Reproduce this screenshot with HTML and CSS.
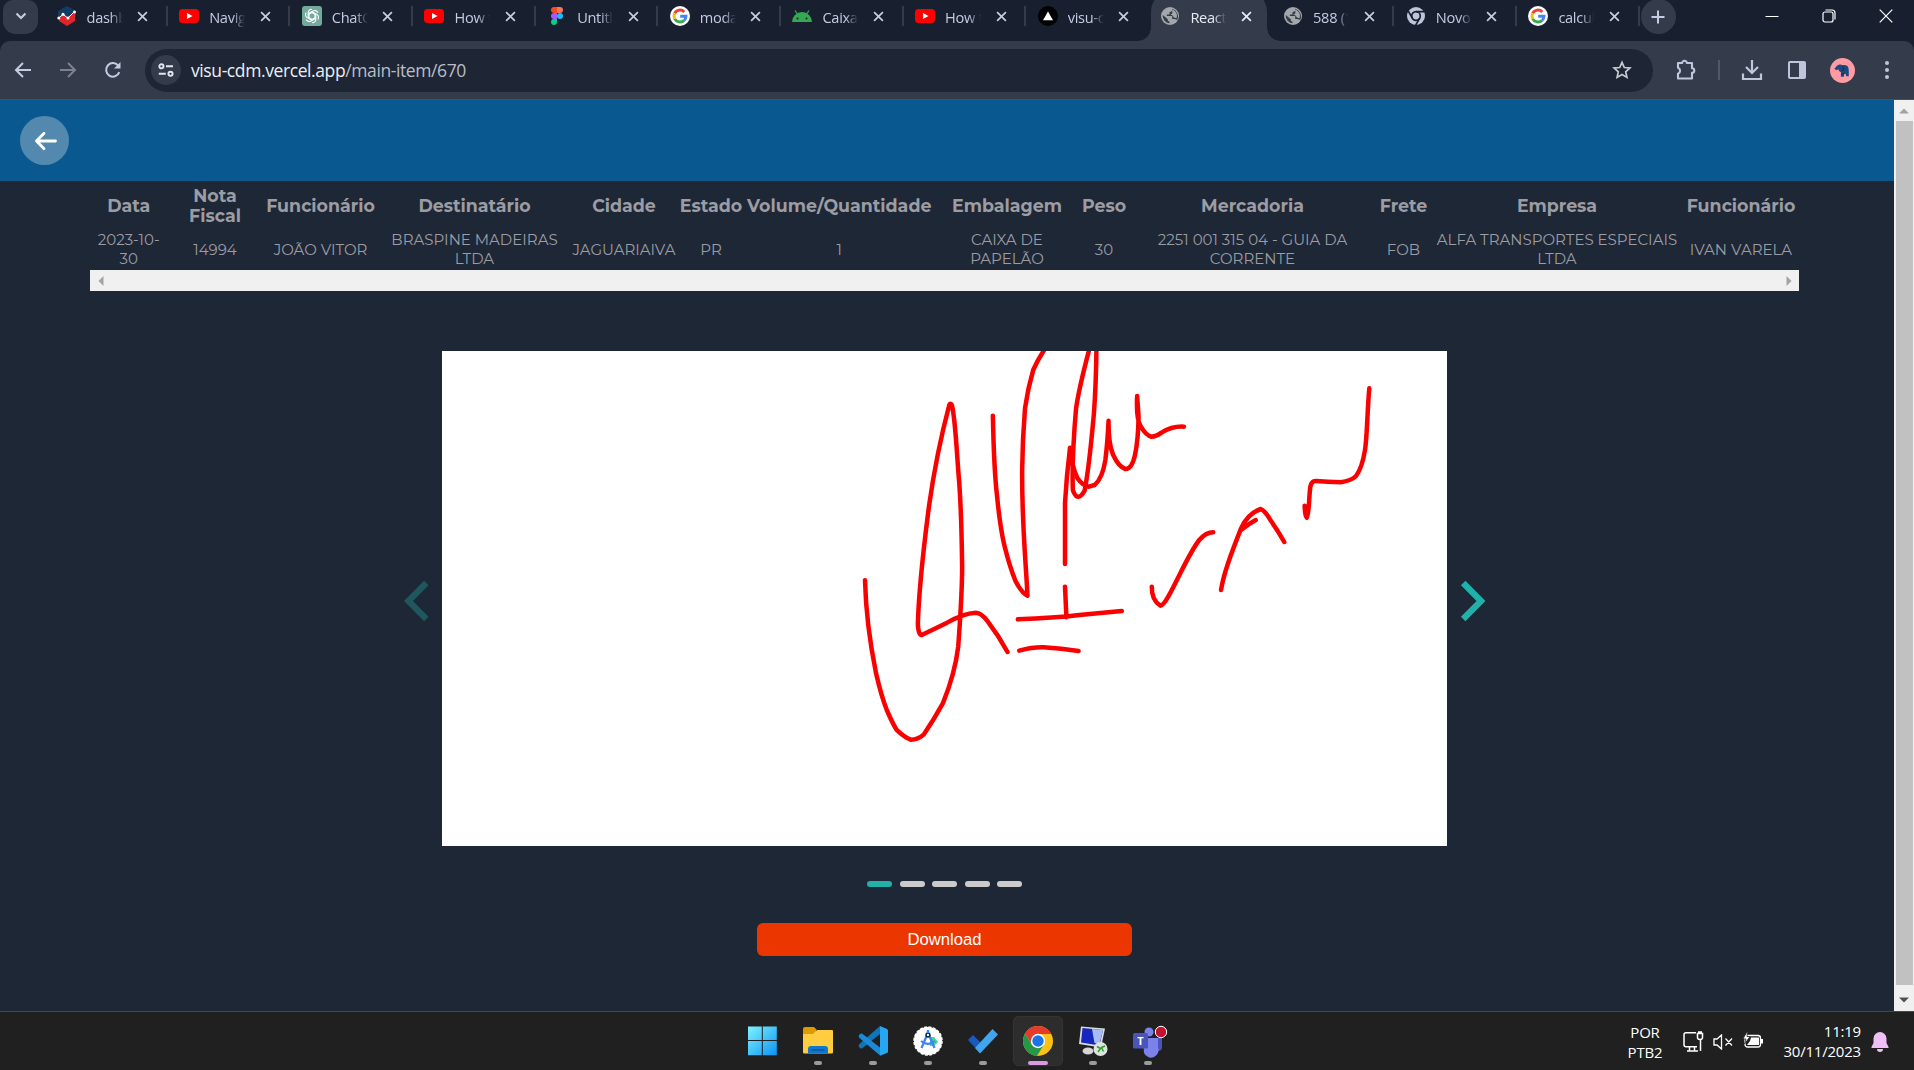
FILE: index.html
```html
<!DOCTYPE html>
<html lang="pt-BR">
<head>
<meta charset="utf-8">
<title>React App</title>
<link rel="stylesheet" href="styles.css">
</head>
<body>
<svg class="sprite" aria-hidden="true">
  <symbol id="i-close" viewBox="0 0 12 12"><path d="M1.2 1.2l9.6 9.6M10.8 1.2L1.2 10.8" fill="none" stroke="currentColor" stroke-width="1.9"/></symbol>
  <symbol id="i-yt" viewBox="0 0 20 20"><rect y="3" width="20" height="14" rx="3.5" fill="#f00"/><path d="M8 7l5.5 3L8 13z" fill="#fff"/></symbol>
  <symbol id="i-google" viewBox="0 0 20 20"><circle cx="10" cy="10" r="10" fill="#fff"/><g fill="none" stroke-width="2.9"><path d="M14.3 5.9A6 6 0 0 0 4.7 7.2" stroke="#ea4335"/><path d="M4.7 7.2a6 6 0 0 0 0 5.6" stroke="#fbbc05"/><path d="M4.7 12.8a6 6 0 0 0 9.4 1.6" stroke="#34a853"/><path d="M14.1 14.4A6 6 0 0 0 16 10.2H10.2" stroke="#4285f4"/></g></symbol>
  <symbol id="i-globe" viewBox="0 0 20 20"><circle cx="10" cy="10" r="9" fill="#a3a7ab"/><path d="M12 2.800V5L9.500 6.200V8.500H6.800V10h5.400v3h2.500l2.500 1A8 8 0 0 0 12 2.800zM2.800 9l5 4.300v1.500l1.700 1V17.300A7.400 7.400 0 0 1 2.800 9z" fill="#343c4c"/><path d="M12 3.500c3 .7 5 3.500 5 6.500l-.5 2.300L14 11.500l-2-2.500h-1.500l2-2z" fill="#a3a7ab"/></symbol>
</svg>

<header class="tabstrip">
  <button class="tab-search"><svg width="12" height="8" viewBox="0 0 12 8"><path d="M1.500 1.500L6 6l4.500-4.500" fill="none" stroke="currentColor" stroke-width="2.200"/></svg></button>
  <nav class="tabs">
    <div class="tab"><svg class="fav" viewBox="0 0 20 20"><path d="M1 5l9-5 9 5v6H1z" fill="#123d63"/><path d="M2 12l4-3 4 3 8-6v9l-8 5-8-5z" fill="#e3242b"/><path d="M1.500 12L6 8.500l5 3.500 6-6" fill="none" stroke="#fff" stroke-width="1"/><g fill="#fff"><circle cx="1.800" cy="12" r="1.500"/><circle cx="6" cy="8.300" r="1.500"/><circle cx="11" cy="12" r="1.500"/><circle cx="17.500" cy="6" r="1.500"/></g></svg><span class="tab-title">dashboard</span><svg class="x"><use href="#i-close"/></svg></div>
    <div class="tab"><svg class="fav"><use href="#i-yt"/></svg><span class="tab-title">Navigation</span><svg class="x"><use href="#i-close"/></svg></div>
    <div class="tab"><svg class="fav" viewBox="0 0 20 20"><rect width="20" height="20" rx="3" fill="#74aa9c"/><g fill="none" stroke="#fff" stroke-width="1.100"><path id="petal" d="M10 3.200c-2.600 0-3.800 1.700-3.800 3.500v4.600l3.800 2.200"/><use href="#petal" transform="rotate(60 10 10)"/><use href="#petal" transform="rotate(120 10 10)"/><use href="#petal" transform="rotate(180 10 10)"/><use href="#petal" transform="rotate(240 10 10)"/><use href="#petal" transform="rotate(300 10 10)"/></g></svg><span class="tab-title">ChatGPT</span><svg class="x"><use href="#i-close"/></svg></div>
    <div class="tab"><svg class="fav"><use href="#i-yt"/></svg><span class="tab-title">How to</span><svg class="x"><use href="#i-close"/></svg></div>
    <div class="tab"><svg class="fav" viewBox="0 0 20 20"><path d="M10 1H7a3 3 0 0 0 0 6h3z" fill="#f24e1e"/><path d="M10 1h3a3 3 0 0 1 0 6h-3z" fill="#ff7262"/><path d="M10 7H7a3 3 0 0 0 0 6h3z" fill="#a259ff"/><circle cx="13" cy="10" r="3" fill="#1abcfe"/><path d="M10 13H7a3 3 0 1 0 3 3z" fill="#0acf83"/></svg><span class="tab-title">Untitled</span><svg class="x"><use href="#i-close"/></svg></div>
    <div class="tab"><svg class="fav"><use href="#i-google"/></svg><span class="tab-title">modal</span><svg class="x"><use href="#i-close"/></svg></div>
    <div class="tab"><svg class="fav" viewBox="0 0 20 20"><path d="M0 16a10 10 0 0 1 20 0z" fill="#34a853"/><path d="M3 4.500l3 4.500M17 4.500L14 9" stroke="#34a853" stroke-width="1.300"/><circle cx="5.500" cy="12.500" r="1" fill="#182030"/><circle cx="14.500" cy="12.500" r="1" fill="#182030"/></svg><span class="tab-title">Caixa de</span><svg class="x"><use href="#i-close"/></svg></div>
    <div class="tab"><svg class="fav"><use href="#i-yt"/></svg><span class="tab-title">How to</span><svg class="x"><use href="#i-close"/></svg></div>
    <div class="tab before-active"><svg class="fav" viewBox="0 0 20 20"><circle cx="10" cy="10" r="10" fill="#000"/><path d="M10 5.500l5 8.700H5z" fill="#fff"/></svg><span class="tab-title">visu-cdm</span><svg class="x"><use href="#i-close"/></svg></div>
    <div class="tab active"><svg class="fav"><use href="#i-globe"/></svg><span class="tab-title">React App</span><svg class="x"><use href="#i-close"/></svg></div>
    <div class="tab"><svg class="fav"><use href="#i-globe"/></svg><span class="tab-title">588 (1)</span><svg class="x"><use href="#i-close"/></svg></div>
    <div class="tab"><svg class="fav" viewBox="0 0 20 20"><circle cx="10" cy="10" r="9" fill="#bfc6dc"/><circle cx="10" cy="10" r="4.300" fill="#bfc6dc" stroke="#182030" stroke-width="1.700"/><path d="M10 5.700h8M6.300 12.200l-4-7M13.700 12.200l-4 7" stroke="#182030" stroke-width="1.700"/></svg><span class="tab-title">Novo guia</span><svg class="x"><use href="#i-close"/></svg></div>
    <div class="tab"><svg class="fav"><use href="#i-google"/></svg><span class="tab-title">calculadora</span><svg class="x"><use href="#i-close"/></svg></div>
  </nav>
  <button class="tab-new"><svg width="14" height="14" viewBox="0 0 14 14"><path d="M7 .5v13M.5 7h13" stroke="currentColor" stroke-width="2"/></svg></button>
  <div class="win">
    <svg width="14" height="14" viewBox="0 0 14 14"><path d="M.5 7.500h13" stroke="#fff"/></svg>
    <svg width="14" height="14" viewBox="0 0 14 14"><g fill="none" stroke="#fff" stroke-width="1.200"><rect x="1" y="3" width="10" height="10" rx="2"/><path d="M3.500 1H10a3 3 0 0 1 3 3v6.500"/></g></svg>
    <svg width="14" height="14" viewBox="0 0 14 14"><path d="M.7.700l12.600 12.600M13.300.7L.7 13.300" stroke="#fff" stroke-width="1.200"/></svg>
  </div>
</header>

<div class="toolbar">
  <svg class="nav-ic" width="20" height="20" viewBox="0 0 20 20"><path d="M18 10H3.500M10 3l-7 7 7 7" fill="none" stroke="#c5cbe0" stroke-width="2"/></svg>
  <svg class="nav-ic" width="20" height="20" viewBox="0 0 20 20"><path d="M2 10h14.500M10 3l7 7-7 7" fill="none" stroke="#7b8191" stroke-width="2"/></svg>
  <svg class="nav-ic" width="20" height="20" viewBox="0 0 20 20"><path d="M16.300 12.200A6.800 6.800 0 1 1 15.500 6" fill="none" stroke="#c5cbe0" stroke-width="2"/><path d="M17.500 2v6.500H11z" fill="#c5cbe0"/></svg>
  <div class="omnibox">
    <span class="site"><svg width="16" height="14" viewBox="0 0 16 14"><g fill="none" stroke="#e3e6f0" stroke-width="1.900"><circle cx="3.400" cy="3.300" r="2.100"/><path d="M8 3.300h7M.8 10.800h7"/><circle cx="12.500" cy="10.800" r="2.100"/></g></svg></span>
    <span class="url"><b>visu-cdm.vercel.app</b>/main-item/670</span>
    <svg class="star" width="20" height="20" viewBox="0 0 20 20"><path d="M10 2.300l2.300 5.200 5.600.5-4.200 3.800 1.200 5.600L10 14.500l-4.900 2.900 1.200-5.600L2.100 8l5.600-.5z" fill="none" stroke="#c8cad0" stroke-width="1.700"/></svg>
  </div>
  <div class="actions">
    <svg width="24" height="24" viewBox="0 0 24 24"><path d="M4 5h4.200a2.300 2.300 0 0 1 4.600 0H18v5.200a2.300 2.300 0 0 1 0 4.600V20.500H4v-4.700a3.200 3.200 0 0 0 0-6z" fill="none" stroke="#bfc6dc" stroke-width="2.100" stroke-linejoin="round"/></svg>
    <i class="bar"></i>
    <svg class="dl" width="22" height="22" viewBox="0 0 22 22"><path d="M11 1v12M5 8l6 6 6-6M2 14.500V20h18v-5.500" fill="none" stroke="#bfc6dc" stroke-width="2.200"/></svg>
    <svg class="sp" width="20" height="20" viewBox="0 0 20 20"><rect x="2" y="2" width="16" height="16" rx="1" fill="none" stroke="#bfc6dc" stroke-width="2"/><path d="M12 2h6v16h-6z" fill="#bfc6dc"/></svg>
    <svg class="av" width="25" height="25" viewBox="0 0 25 25"><circle cx="12.500" cy="12.500" r="12.500" fill="#ff9ba3"/><path d="M4.500 10c1.500.3 1.300-2.500 4-3 1-.7 3-.6 4 .2 3-.8 5.500.3 6 3 .5 2.500.2 5 .3 8h-2.600l-.6-2.500-1.400.2-.3 2.800H10.800l.2-4.500c-1.500-.2-2-1.500-2.500-2.700-2 .8-4 .5-4-1.500z" fill="#174a80"/><path d="M12.500 8.500l1.500 2.500-2 2M11.500 16h2.500" fill="none" stroke="#0b2747" stroke-width="1"/></svg>
    <svg class="more" width="6" height="20" viewBox="0 0 6 20"><g fill="#bfc6dc"><circle cx="3" cy="3" r="2"/><circle cx="3" cy="10" r="2"/><circle cx="3" cy="17" r="2"/></g></svg>
  </div>
</div>

<div class="viewport">
  <main class="page">
    <div class="topbar">
      <button class="back"><svg width="24" height="20" viewBox="0 0 24 20"><path d="M22.500 10H4M11 2.200L3.500 10l7.500 7.800" fill="none" stroke="#fff" stroke-width="2.800" stroke-linecap="round" stroke-linejoin="round"/></svg></button>
    </div>
    <section class="sheet">
      <div class="row head">
        <span>Data</span><span>Nota<br>Fiscal</span><span>Funcionário</span><span>Destinatário</span><span>Cidade</span><span>Estado</span><span>Volume/Quantidade</span><span>Embalagem</span><span>Peso</span><span>Mercadoria</span><span>Frete</span><span>Empresa</span><span>Funcionário</span>
      </div>
      <div class="row cells">
        <span>2023-10-<br>30</span><span>14994</span><span>JOÃO VITOR</span><span>BRASPINE MADEIRAS<br>LTDA</span><span>JAGUARIAIVA</span><span>PR</span><span>1</span><span>CAIXA DE<br>PAPELÃO</span><span>30</span><span>2251 001 315 04 - GUIA DA<br>CORRENTE</span><span>FOB</span><span>ALFA TRANSPORTES ESPECIAIS<br>LTDA</span><span>IVAN VARELA</span>
      </div>
      <div class="hscroll">
        <svg width="6" height="10" viewBox="0 0 6 10"><path d="M5.500 0v10L.5 5z" fill="#a3a3a3"/></svg>
        <svg width="6" height="10" viewBox="0 0 6 10"><path d="M.5 0v10l5-5z" fill="#a3a3a3"/></svg>
      </div>
    </section>
    <section class="carousel">
      <svg class="arrow off" width="26" height="44" viewBox="0 0 26 44"><path d="M23.300 4L5.500 22l17.800 18" fill="none" stroke="#20b2aa" stroke-width="6.300"/></svg>
      <svg class="slide" width="1005" height="495" viewBox="0 0 1005 495">
        <g class="ink" transform="translate(398 -11) scale(.35714 .33333)">
          <path d="M70 721C72 800 82 900 101 1000Q116 1070 131 1110Q145 1145 158 1169Q180 1192 198 1199Q218 1199 235 1183Q262 1140 288 1090Q322 1000 331 920C337 830 342 760 342 680Q340 520 334 430C326 330 323 230 313 195Q309 188 306 195Q270 340 249 500C236 610 222 720 218 850Q219 885 229 885L300 848Q345 820 380 818Q395 818 412 842Q445 888 469 936"/>
          <path d="M428 227C430 330 432 400 440 470Q448 560 460 615Q475 680 491 722Q508 758 525 767C520 660 509 550 510 390Q511 300 518 205Q526 145 541 90Q553 60 573 28"/>
          <path d="M698 28Q670 140 661 205C655 280 649 370 652 450Q665 490 685 452C698 380 705 290 711 220Q717 130 718 28"/>
          <path d="M630 672V490Q634 410 644 323Q649 380 665 415Q680 438 697 440L713 435Q735 415 743 360Q749 310 752 242Q751 310 765 345Q780 380 799 387Q817 388 826 345Q835 300 836 230L832 168Q829 235 841 257Q857 287 872 290Q885 290 900 278Q930 258 963 260"/>
          <path d="M630 740L634 832M498 838Q600 834 670 825L789 813M502 932Q540 921 570 922Q620 926 668 933"/>
          <path d="M873 740Q872 780 897 797Q905 797 919 770C950 710 977 640 1006 600Q1025 577 1045 577"/>
          <path d="M1067 750C1075 690 1100 630 1123 565Q1142 520 1178 507Q1190 512 1205 540Q1228 575 1244 606M1123 570Q1145 551 1164 540"/>
          <path d="M1301 497Q1302 530 1307 533C1315 510 1312 480 1317 440Q1320 422 1333 423Q1365 426 1402 427Q1432 422 1445 408Q1462 383 1470 330C1476 290 1476 220 1482 145"/>
        </g>
      </svg>
      <svg class="arrow" width="26" height="44" viewBox="0 0 26 44"><path d="M3.200 4L21 22 3.200 40" fill="none" stroke="#20b2aa" stroke-width="6.300"/></svg>
    </section>
    <div class="dots"><i class="on"></i><i></i><i></i><i></i><i></i></div>
    <button class="download">Download</button>
  </main>
  <div class="vscroll">
    <svg width="10" height="6" viewBox="0 0 10 6"><path d="M0 5.500h10L5 .5z" fill="#a3a3a3"/></svg>
    <i></i>
    <svg width="10" height="6" viewBox="0 0 10 6"><path d="M0 .5h10L5 5.500z" fill="#505050"/></svg>
  </div>
</div>

<footer class="taskbar">
  <div class="apps">
    <div class="app none"><svg viewBox="0 0 30 30"><defs><linearGradient id="win" x1="0" y1="0" x2="1" y2="1"><stop offset="0" stop-color="#7ff3ff"/><stop offset="1" stop-color="#0a93f5"/></linearGradient></defs><path d="M0 .5h13.800V14H0zM14.800.5H28.800V14h-14zM0 15h13.800v14.300H0zM14.800 15H28.800v14.300h-14z" fill="url(#win)"/></svg></div>
    <div class="app"><svg viewBox="0 0 30 30"><path d="M0 3q0-2 2-2h9l3 3h-1v6H0z" fill="#dd9a05"/><path d="M0 8h10l4-4h15q1 0 1 1v21q0 1.500-1 1.500H1q-1 0-1-1.500z" fill="#ffcd3f"/><path d="M5 27.500V23q0-3 3-3h14q3 0 3 3v4.500z" fill="#0f78cc"/><path d="M8.500 24h13" stroke="#0a4c8c" stroke-width="1.200"/></svg></div>
    <div class="app"><svg viewBox="0 0 30 30"><path d="M22 0v8L4 22.500Q2.500 23 1 21q-1-1.500.5-3z" fill="#0f74ba"/><path d="M22 29.500v-8L4 7.500Q2.500 7 1 9q-1 1.500.5 3z" fill="#1a8ad6"/><path d="M22 0l7 3q1 .5 1 1.500v21q0 1-1 1.500l-7 2.800z" fill="#27a7f2"/></svg></div>
    <div class="app"><svg viewBox="0 0 30 30"><circle cx="15" cy="15" r="14" fill="#fff" stroke="#fff" stroke-width="1.500" stroke-dasharray="3 1.400"/><path d="M17 11h4l4 5-4 4h-4z" fill="#3ddc84"/><path d="M14 9L8.500 22M16 9l5.500 13M8 15q7 6 14 0" fill="none" stroke="#4285f4" stroke-width="2.300"/><circle cx="15" cy="9" r="1.900" fill="#fff" stroke="#083042" stroke-width="1.500"/><path d="M15 4v3" stroke="#4285f4" stroke-width="2.500"/></svg></div>
    <div class="app"><svg viewBox="0 0 30 30"><path d="M0 14l5-5 9 9-2 9z" fill="#185abd"/><path d="M7 22L24.500 3l5.500 5.500L12 27.500z" fill="#41a5ee"/></svg></div>
    <div class="app current"><svg viewBox="0 0 30 30"><circle cx="15" cy="15" r="15" fill="#fbc116"/><path d="M15 8H28.200A15 15 0 0 0 2 7.500l6.900 11z" fill="#e33b2e"/><path d="M2 7.500A15 15 0 0 0 14 30l7-11.500-12.100 0z" fill="#279847"/><circle cx="15" cy="15" r="7.200" fill="#fff"/><circle cx="15" cy="15" r="5.700" fill="#1a73e8"/></svg></div>
    <div class="app"><svg viewBox="0 0 30 30"><ellipse cx="10" cy="25" rx="5.500" ry="3.500" fill="#d6d6d6"/><path d="M3 .5l24 2-4 19L1 18z" fill="#d9dce0"/><path d="M4.500 2L25 4l-3.500 15.500L3 16.500z" fill="#1727bd"/><path d="M14 3l11 1-3.500 14-5-1z" fill="#a7bdf2"/><circle cx="22.500" cy="23" r="7" fill="#dfe3e0"/><path d="M19 20.500l3.500 2-2.500 3.500M27 20l-3.500 1.500 2 4" fill="none" stroke="#2ca02c" stroke-width="1.500"/></svg></div>
    <div class="app"><svg viewBox="0 0 30 30"><circle cx="16" cy="6" r="4.500" fill="#7b83eb"/><path d="M21 12h8v9q0 4-4 4h-4z" fill="#4b53bc"/><path d="M10 12h15v9a7 7 0 0 1-14 6z" fill="#7b83eb"/><rect y="7" width="15" height="15.500" rx="1.500" fill="#4b53bc"/><text class="teams-t" x="7.500" y="19" text-anchor="middle">T</text><circle cx="28" cy="6" r="5.700" fill="#c4112f" stroke="#fff" stroke-width="1"/></svg></div>
  </div>
  <div class="tray">
    <div class="lang">POR<br>PTB2</div>
    <svg class="t-net" width="21" height="22" viewBox="0 0 21 22"><g fill="none" stroke="#fff" stroke-width="1.500"><path d="M13 1.700H3q-2 0-2 2v10q0 2 2 2h11M6.500 16v3.500M11.500 16v3.500M4 20h11M17.500 9v11"/><path d="M14.500 2.500h5v4q0 2-2.500 2t-2.500-2zM15 1h4"/></g></svg>
    <svg class="t-vol" width="20" height="16" viewBox="0 0 20 16"><path d="M1 5h3l4.500-4v14L4 11H1zM12.500 4.500l6.500 7M19 4.500l-6.500 7" fill="none" stroke="#fff" stroke-width="1.300"/></svg>
    <svg class="t-bat" width="21" height="18" viewBox="0 0 21 18"><rect x="2" y="4.500" width="15.500" height="11.500" rx="2.500" fill="none" stroke="#fff" stroke-width="1.300"/><path d="M8 6.500h8v7.500H4l3-4zM18 8h2v4.500h-2z" fill="#fff"/><path d="M4.500 0L0 8h3L1.500 13 7 5.500H4z" fill="#fff" stroke="#202020" stroke-width=".7"/></svg>
    <div class="clock">11:19<br>30/11/2023</div>
    <svg class="t-bell" width="18" height="20" viewBox="0 0 18 20"><path d="M9 0a6.500 6.500 0 0 1 6.500 6.500V11l2 4v1H.5v-1l2-4V6.500A6.500 6.500 0 0 1 9 0zM6 17h6a3 3 0 0 1-6 0z" fill="#f0bff5"/></svg>
  </div>
</footer>
</body>
</html>
```
FILE: styles.css
```css
* { box-sizing: border-box; }
body {
  margin: 0;
  width: 1914px;
  height: 1070px;
  overflow: hidden;
  display: flex;
  flex-direction: column;
  background: #182030;
  font-family: "Open Sans", "Noto Sans", sans-serif;
}
button { border: 0; padding: 0; font: inherit; color: inherit; display: grid; place-items: center; }
svg { display: block; flex: none; }
.sprite { position: absolute; width: 0; height: 0; }

/* tab strip */
.tabstrip { height: 41px; flex: none; display: flex; align-items: flex-start; background: #182030; color: #c5cbe0; }
.tab-search { width: 35px; height: 34px; margin: 0 6px 0 3px; background: #343c4c; border-radius: 10px 10px 13px 13px; padding-bottom: 3px; }
.tabs { display: flex; }
.tab { width: 122.67px; height: 41px; display: flex; align-items: center; padding: 0 0 9px 12.500px; position: relative; }
.tab::after { content: ""; position: absolute; right: -1px; top: 6px; width: 2px; height: 20px; background: #343c4c; }
.tab.before-active::after { display: none; }
.fav { width: 20px; height: 20px; }
.tab-title {
  width: 36px; margin-left: 10px; overflow: hidden; white-space: nowrap;
  font-size: 14.600px; line-height: 20px; font-weight: 500; letter-spacing: -.3px; padding-top: 1px;
  -webkit-mask-image: linear-gradient(90deg, #000 65%, transparent);
  mask-image: linear-gradient(90deg, #000 65%, transparent);
}
.x { width: 11px; height: 11px; margin-left: 14.500px; }
.tab.active { color: #e8eaf2; z-index: 0; }
.tab.active::before {
  content: ""; position: absolute; z-index: -1; left: 3px; right: 4px; top: -10px; bottom: 0;
  background: #343c4c; border-radius: 22px 22px 0 0;
}
.tab.active::after {
  z-index: -1; left: -10px; right: -9px; top: auto; bottom: 0; width: auto; height: 13px;
  background:
    radial-gradient(circle at 0 0, transparent 12.500px, #343c4c 13px) 0 0 / 13px 13px no-repeat,
    radial-gradient(circle at 100% 0, transparent 12.500px, #343c4c 13px) 100% 0 / 13px 13px no-repeat;
}
.tab-new { width: 35px; height: 35px; margin: -1px 0 0 2px; border-radius: 50%; background: #343c4c; }
.win { margin-left: auto; display: flex; gap: 43px; padding: 9px 21px 0 0; }

/* toolbar */
.toolbar { height: 59px; flex: none; display: flex; align-items: flex-start; background: #343c4c; border-bottom: 1px solid #4b4f5d; border-radius: 10px 10px 0 0; padding: 8px 0 0 13px; }
.nav-ic { margin: 11px 25px 0 0; }
.nav-ic:nth-child(3) { margin-right: 22px; }
.omnibox { width: 1508px; height: 43px; border-radius: 22px; background: #1e2635; display: flex; align-items: center; padding: 0 21px 1px 6px; }
.site { width: 30px; height: 30px; border-radius: 50%; background: #343c4c; display: grid; place-items: center; }
.url { margin-left: 10px; font-size: 17.500px; line-height: 24px; letter-spacing: -.4px; color: #b9bdc7; flex: 1; }
.url b { font-weight: 400; color: #eceef4; }
.actions { display: flex; align-items: center; height: 42px; }
.actions > svg:first-child { margin-left: 21px; }
.bar { width: 2px; height: 20px; background: #515868; margin-left: 20px; }
.dl { margin-left: 21px; }
.sp { margin-left: 24px; }
.av { margin-left: 23px; }
.more { margin-left: 29px; }

/* page */
.viewport { height: 911px; flex: none; display: flex; }
.page { width: 1894px; background: #1e2736; display: flex; flex-direction: column; }
.topbar { height: 81px; background: #09588f; padding: 16px 20px; }
.back { width: 49px; height: 49px; border-radius: 50%; background: #5489af; }
.sheet { width: 1709px; margin-left: 90px; color: #9c9ca3; font-family: Montserrat, "Inter", sans-serif; }
.row { display: grid; grid-template-columns: 77.500px 95px 116px 192px 107px 67px 189.500px 146px 48px 249px 53px 254px 114px; text-align: center; align-items: center; white-space: nowrap; }
.row span { display: block; margin: 0 -10px; }
.head { height: 48px; padding-top: 2px; font-size: 17.400px; line-height: 20px; font-weight: 700; }
.cells { height: 41px; padding-bottom: 1px; font-size: 15px; line-height: 19px; font-weight: 400; }
.hscroll { height: 21px; background: #f0f0f0; display: flex; align-items: center; justify-content: space-between; padding: 0 7px 0 8px; }
.carousel { display: flex; align-items: center; margin: 60px 0 0 403px; }
.arrow { margin-top: 4px; }
.arrow.off { opacity: .35; margin-right: 13px; }
.slide { background: #fff; margin-right: 13px; }
.ink path { fill: none; stroke: #fb0000; stroke-width: 4.500px; stroke-linecap: round; stroke-linejoin: round; vector-effect: non-scaling-stroke; }
.dots { display: flex; gap: 7.500px; margin: 35px 0 0 867px; }
.dots i { width: 25px; height: 6px; border-radius: 3px; background: #cbcbcb; }
.dots .on { background: #20b2aa; }
.download { width: 375px; height: 33px; margin: 36px 0 0 757px; border-radius: 6px; background: #eb3600; color: #fff; font: 16.670px "Liberation Sans", Arial, sans-serif; }
.vscroll { width: 20px; background: #f0f0f0; display: flex; flex-direction: column; align-items: center; padding: 8px 0 8px; }
.vscroll i { width: 17px; height: 864px; background: #c1c1c1; margin: 7px 0 12px; }

/* taskbar */
.taskbar { height: 59px; flex: none; background: #202020; border-top: 1px solid #474747; display: flex; color: #fff; }
.apps { display: flex; gap: 5px; margin-left: 738px; padding-top: 4px; }
.app { width: 50px; height: 50px; border-radius: 6px; display: flex; flex-direction: column; align-items: center; padding-top: 10px; }
.app svg { width: 30px; height: 30px; overflow: visible; }
.app::after { content: ""; width: 8px; height: 4px; border-radius: 2px; background: #9b9b9b; margin-top: 5px; }
.app.none::after { display: none; }
.app.current { background: #2d2d2d; box-shadow: inset 0 0 0 1px #343434; }
.app.current::after { width: 20px; background: #d99be0; }
.teams-t { font: 700 11px "Open Sans", sans-serif; fill: #fff; }
.tray { margin-left: auto; display: flex; align-items: flex-start; font-size: 15px; line-height: 20px; letter-spacing: -.2px; padding: 9px 25px 0 0; }
.lang { text-align: center; width: 36px; padding-top: 1px; }
.t-net { margin: 10px 0 0 20px; }
.t-vol { margin: 13px 0 0 9px; }
.t-bat { margin: 10px 0 0 10px; }
.clock { text-align: right; width: 90px; margin-left: 7px; }
.t-bell { margin: 11px 0 0 10px; }
```
